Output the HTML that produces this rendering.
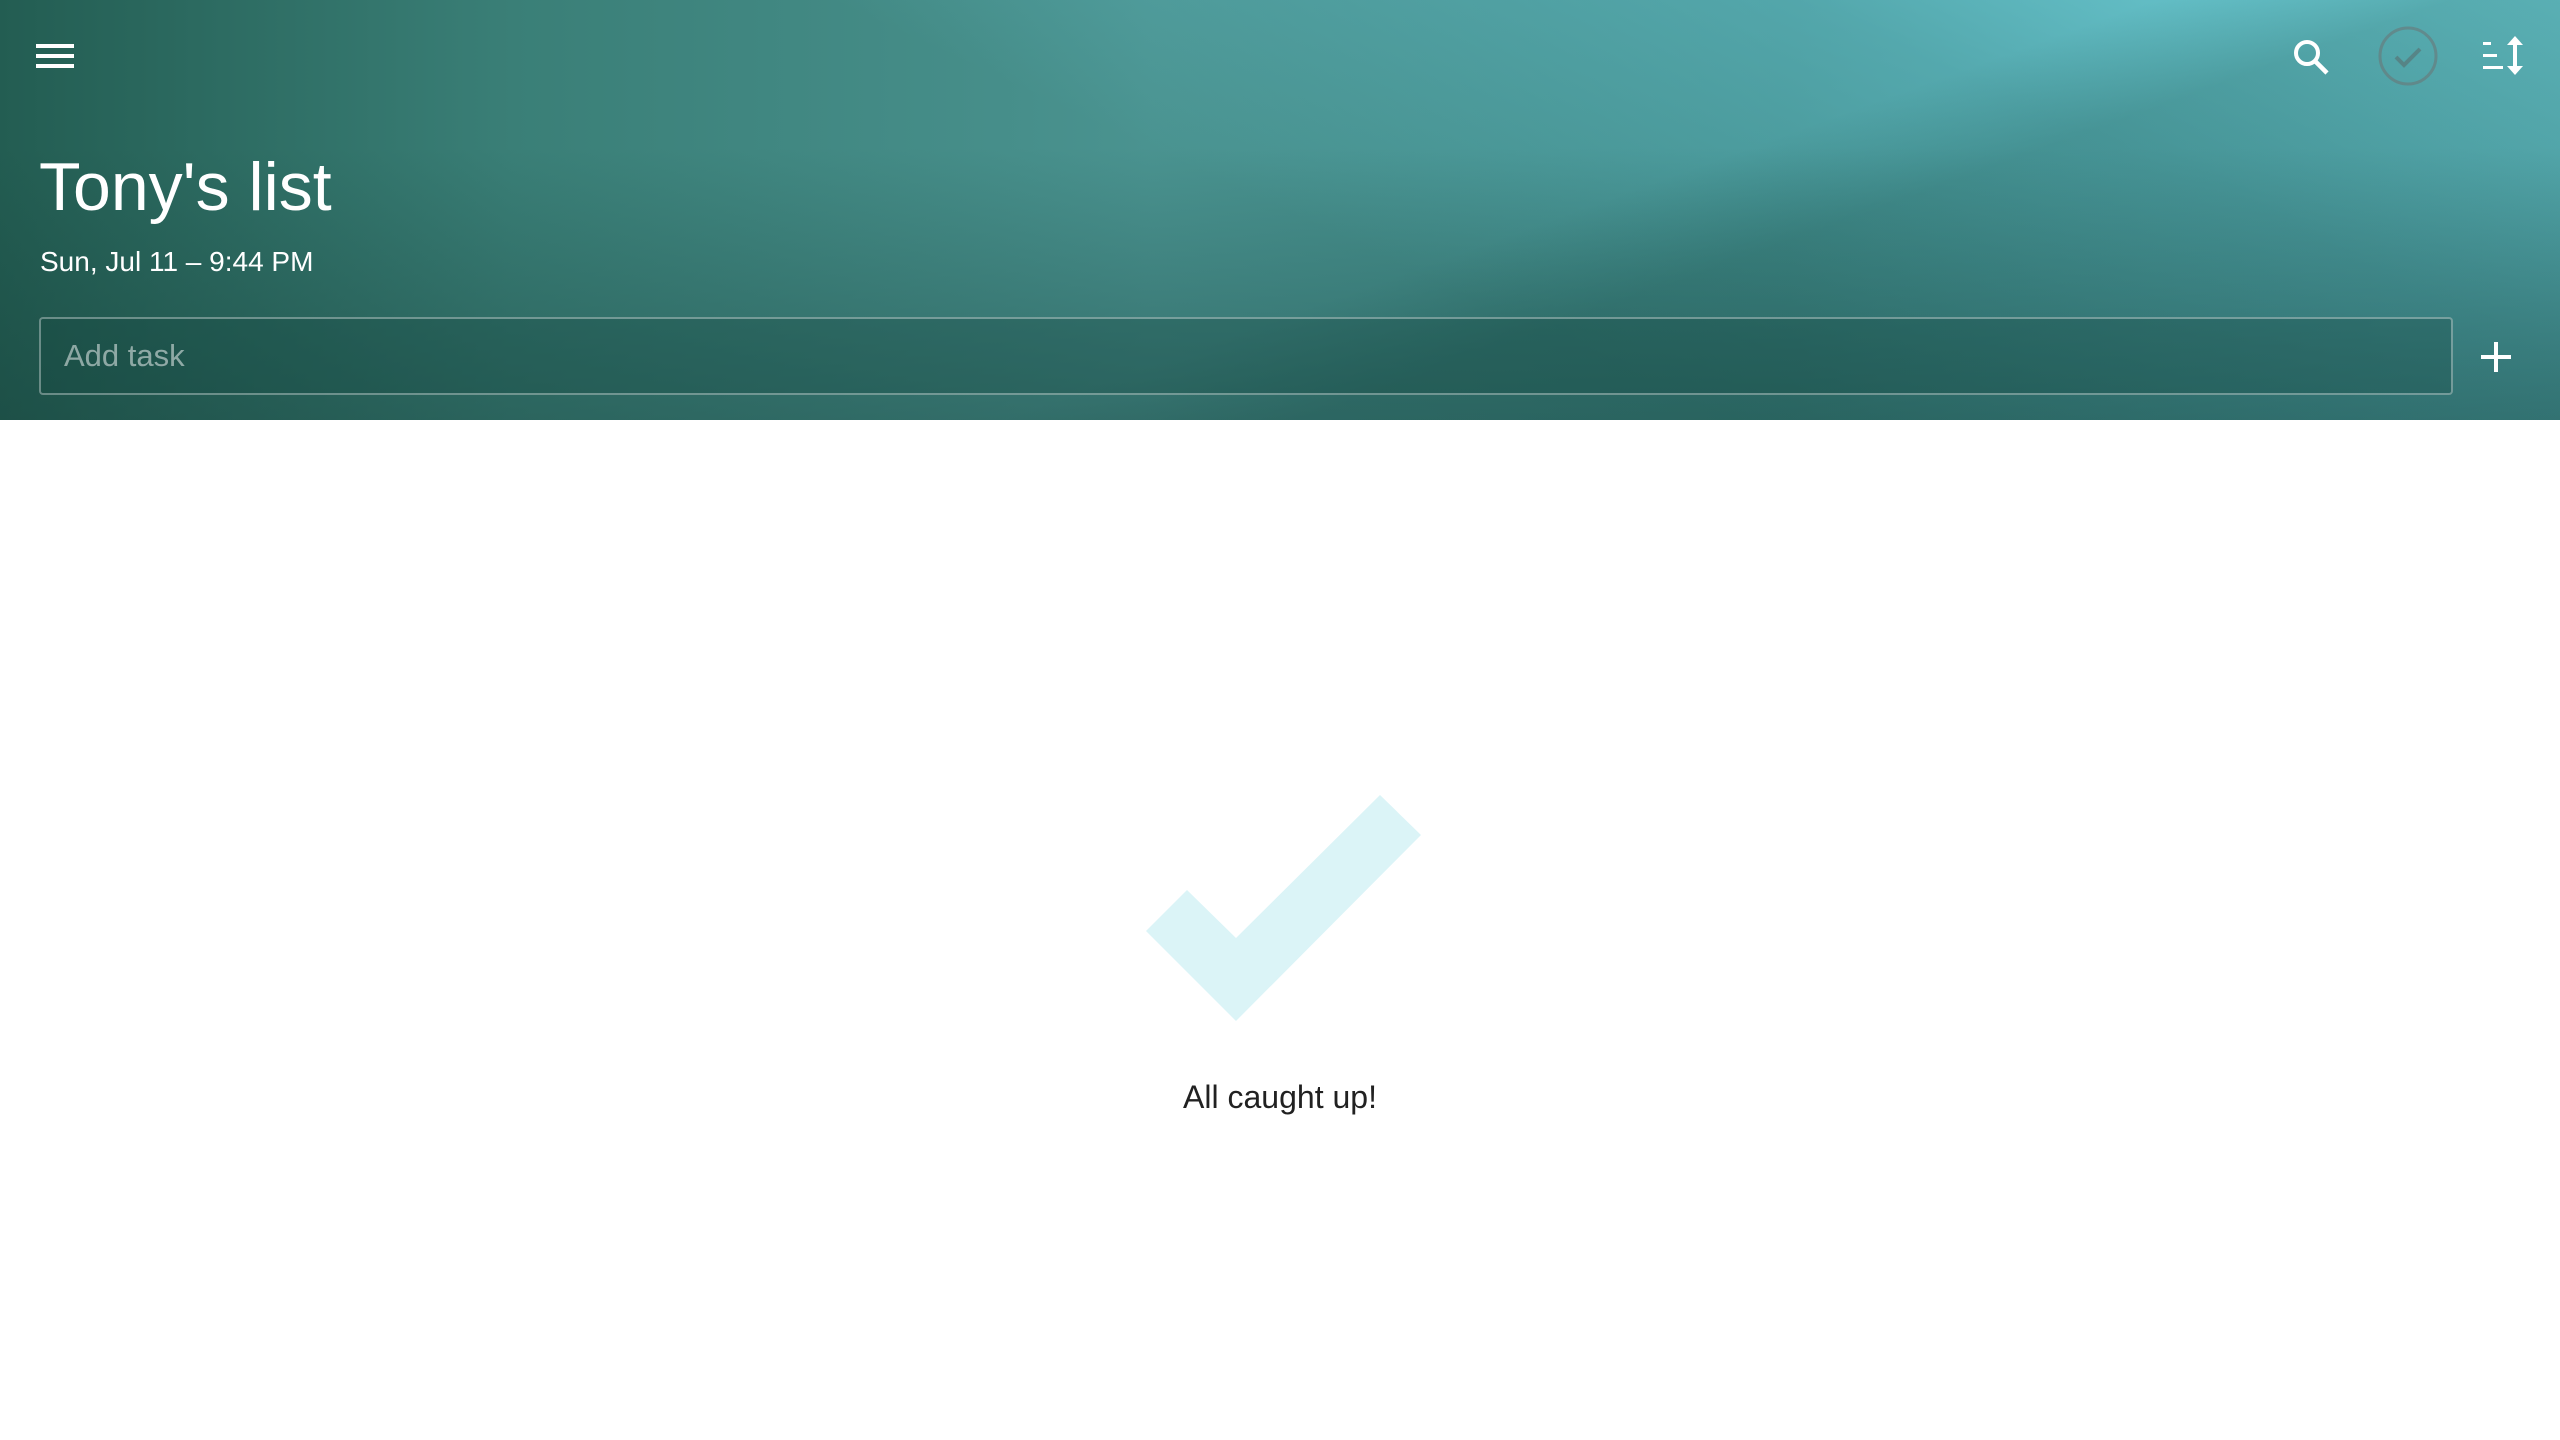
<!DOCTYPE html>
<html><head><meta charset="utf-8"><style>
*{margin:0;padding:0;box-sizing:border-box}
body{width:2560px;height:1440px;background:#fff;font-family:"Liberation Sans",sans-serif;overflow:hidden;position:relative}
#hdr{position:absolute;left:0;top:0;width:2560px;height:420px;overflow:hidden;
background:
linear-gradient(205deg,rgba(115,212,222,0.95) 0%,rgba(100,190,200,0.55) 22%,rgba(60,140,140,0) 50%),
linear-gradient(90deg,#235d52 0%,#3a7f77 20%,#4a9390 45%,#3f8a88 70%,#4aa0a5 100%);}
#dark{position:absolute;left:0;top:0;width:2560px;height:420px;background:linear-gradient(180deg,rgba(0,0,0,0) 35%,rgba(20,60,55,0.4) 100%)}
#slope{position:absolute;left:0;top:0;width:2560px;height:420px;background:linear-gradient(160deg,rgba(0,0,0,0) 58%,rgba(35,95,88,0.3) 66%)}
.t{position:absolute;color:#fff}
#title{left:39px;top:148px;font-size:68px;font-weight:300}
#date{left:40px;top:246px;font-size:28px}
#box{position:absolute;left:39px;top:317px;width:2414px;height:78px;border:2px solid rgba(255,255,255,0.35);border-radius:4px;background:rgba(20,70,62,0.3)}
#ph{left:64px;top:338px;font-size:31px;color:rgba(255,255,255,0.5)}
#caught{position:absolute;left:0;width:2560px;text-align:center;top:1079px;font-size:32px;color:#212121}
</style></head><body>
<div id="hdr"><div id="slope"></div><div id="dark"></div></div>
<svg style="position:absolute;left:36px;top:42px" width="40" height="28"><rect x="0" y="2" width="38" height="4" fill="#fff"/><rect x="0" y="12" width="38" height="4" fill="#fff"/><rect x="0" y="22" width="38" height="4" fill="#fff"/></svg>
<div class="t" id="title">Tony's list</div>
<div class="t" id="date">Sun, Jul 11 – 9:44 PM</div>
<div id="box"></div>
<div class="t" id="ph">Add task</div>
<svg style="position:absolute;left:2481px;top:342px" width="30" height="30"><rect x="13" y="0" width="4" height="30" fill="#fff"/><rect x="0" y="13" width="30" height="4" fill="#fff"/></svg>
<svg style="position:absolute;left:2290px;top:36px" width="44" height="44"><circle cx="17" cy="17" r="11" fill="none" stroke="#fff" stroke-width="4"/><line x1="25" y1="25" x2="37" y2="37" stroke="#fff" stroke-width="4.5"/></svg>
<svg style="position:absolute;left:2376px;top:24px" width="64" height="64"><circle cx="32" cy="32" r="28" fill="none" stroke="rgba(110,110,110,0.5)" stroke-width="3"/><polyline points="20,33 28,41 44,25" fill="none" stroke="rgba(90,100,100,0.5)" stroke-width="4"/></svg>
<svg style="position:absolute;left:2482px;top:36px" width="46" height="40"><rect x="1" y="6" width="8" height="3" fill="#fff"/><rect x="1" y="18" width="14" height="3" fill="#fff"/><rect x="1" y="30" width="20" height="3" fill="#fff"/><rect x="31" y="6" width="4" height="26" fill="#fff"/><polygon points="33,0 41,9 25,9" fill="#fff"/><polygon points="33,39 41,30 25,30" fill="#fff"/></svg>
<svg style="position:absolute;left:0;top:0" width="2560" height="1440"><polygon points="1146,931 1187,890 1236,938 1380,795 1421,835 1236,1021" fill="#dbf4f7"/></svg>
<div id="caught">All caught up!</div>
</body></html>
